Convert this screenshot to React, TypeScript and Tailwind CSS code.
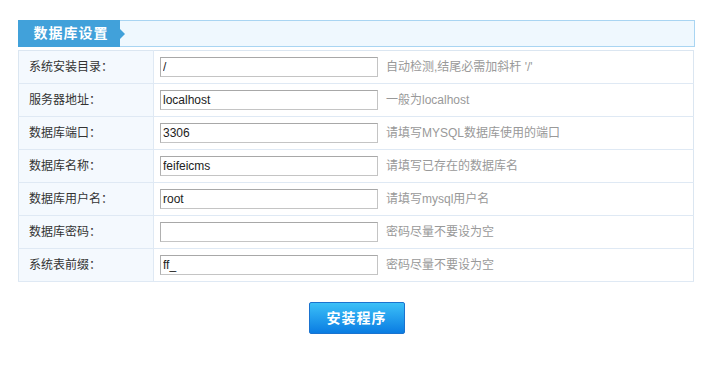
const rows = [
  { label: "系统安装目录：", value: "/", hint: "自动检测,结尾必需加斜杆 '/'" },
  { label: "服务器地址：", value: "localhost", hint: "一般为localhost" },
  { label: "数据库端口：", value: "3306", hint: "请填写MYSQL数据库使用的端口" },
  { label: "数据库名称：", value: "feifeicms", hint: "请填写已存在的数据库名" },
  { label: "数据库用户名：", value: "root", hint: "请填写mysql用户名" },
  { label: "数据库密码：", value: "", hint: "密码尽量不要设为空" },
  { label: "系统表前缀：", value: "ff_", hint: "密码尽量不要设为空" },
];

export default function App() {
  return (
    <div
      className="w-[724px] h-[370px] bg-white pt-[20px] pl-[18px]"
      style={{ fontFamily: "Tahoma, 'Liberation Sans', 'Noto Sans CJK SC', sans-serif" }}
    >
      <div className="w-[677px]">
        <div className="relative flex h-[27px] items-stretch border border-[#a9d5f2] bg-[#eff8fe]">
          <div className="relative -my-px -ml-px flex w-[102px] items-center justify-center bg-[#41a1da] pl-[4px] text-[14px] font-bold tracking-[1px] text-white">
            数据库设置
            <span className="absolute right-[-5px] top-1/2 h-0 w-0 -translate-y-1/2 border-y-[5px] border-l-[5px] border-y-transparent border-l-[#41a1da]" />
          </div>
        </div>
        <table className="mt-[3px] w-[676px] border-collapse border border-[#dbe6f1] text-[12px]">
          <tbody>
            {rows.map((r) => (
              <tr key={r.label} className="h-[33px] border-b border-[#dfe9f4]">
                <td className="w-[135px] border-r border-[#dfe9f4] bg-[#f4f9fe] pl-[10px] text-[#333]">{r.label}</td>
                <td className="pl-[6px]">
                  <div className="flex items-center">
                    <input
                      readOnly
                      value={r.value}
                      className="h-[20px] w-[218px] border border-[#c4c4c4] border-t-[#a8a8a8] border-l-[#b0b0b0] bg-white px-[2px] text-[12px] text-[#222] outline-none"
                    />
                    <span className="ml-[8px] text-[#999]">{r.hint}</span>
                  </div>
                </td>
              </tr>
            ))}
          </tbody>
        </table>
        <div className="mt-[20px] flex justify-center">
          <button className="h-[32px] w-[96px] rounded-[2px] border border-[#1a73cf] bg-gradient-to-b from-[#3cc0f7] to-[#0a7ce2] text-[14px] font-bold tracking-[1px] text-white">
            安装程序
          </button>
        </div>
      </div>
    </div>
  );
}
